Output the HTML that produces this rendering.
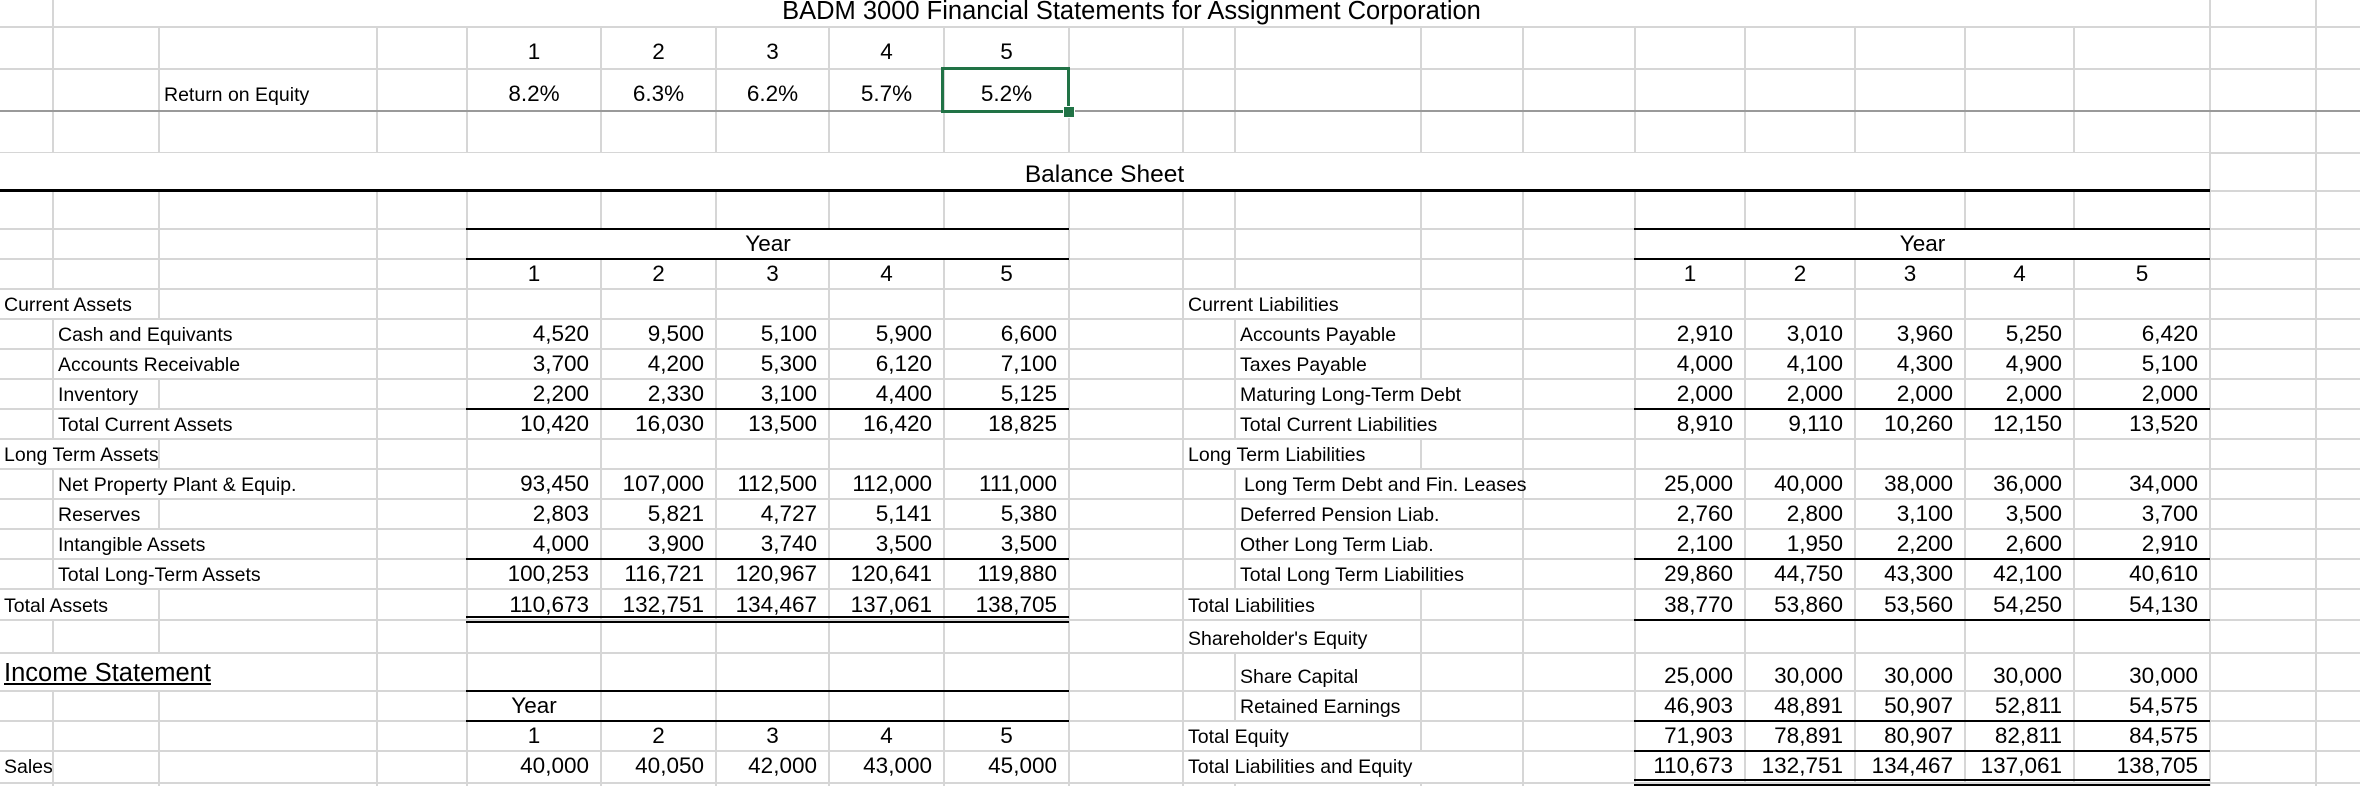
<!DOCTYPE html>
<html><head><meta charset="utf-8">
<style>
*{margin:0;padding:0;box-sizing:border-box}
body{width:2360px;height:786px;overflow:hidden;background:#fff;font-family:"Liberation Sans",sans-serif;color:#000;position:relative}
.v{position:absolute;top:0;height:786px;width:2px;background:#d6d6d6}
.h{position:absolute;left:0;width:2360px;height:2px;background:#d6d6d6}
.b{position:absolute;height:2px;background:#000}
.r{position:absolute;left:0;width:2360px}
.c{position:absolute;top:0;bottom:0;display:flex;align-items:flex-end;padding-bottom:4px;font-size:22.5px;line-height:1;white-space:nowrap}
.n{justify-content:flex-end;padding-right:12px}
.ct{justify-content:center}
.l{font-size:19.5px;background:#fff;top:1px;bottom:1px;padding-left:4px;padding-bottom:3px}
.k1{left:467px;width:134px}.k2{left:601px;width:115px}.k3{left:716px;width:113px}.k4{left:829px;width:115px}.k5{left:944px;width:125px}
.m1{left:1635px;width:110px}.m2{left:1745px;width:110px}.m3{left:1855px;width:110px}.m4{left:1965px;width:109px}.m5{left:2074px;width:136px}
</style></head><body>
<div class="v" style="left:52px"></div><div class="v" style="left:158px"></div><div class="v" style="left:376px"></div><div class="v" style="left:466px"></div><div class="v" style="left:600px"></div><div class="v" style="left:715px"></div><div class="v" style="left:828px"></div><div class="v" style="left:943px"></div><div class="v" style="left:1068px"></div><div class="v" style="left:1182px"></div><div class="v" style="left:1234px"></div><div class="v" style="left:1420px"></div><div class="v" style="left:1522px"></div><div class="v" style="left:1634px"></div><div class="v" style="left:1744px"></div><div class="v" style="left:1854px"></div><div class="v" style="left:1964px"></div><div class="v" style="left:2073px"></div><div class="v" style="left:2209px"></div><div class="v" style="left:2315px"></div>
<div class="h" style="top:26px"></div><div class="h" style="top:68px"></div><div class="h" style="top:110px;background:#9a9a9a"></div><div class="h" style="top:152px"></div><div class="h" style="top:190px"></div><div class="h" style="top:228px"></div><div class="h" style="top:258px"></div><div class="h" style="top:288px"></div><div class="h" style="top:318px"></div><div class="h" style="top:348px"></div><div class="h" style="top:378px"></div><div class="h" style="top:408px"></div><div class="h" style="top:438px"></div><div class="h" style="top:468px"></div><div class="h" style="top:498px"></div><div class="h" style="top:528px"></div><div class="h" style="top:558px"></div><div class="h" style="top:588px"></div><div class="h" style="top:619px"></div><div class="h" style="top:652px"></div><div class="h" style="top:690px"></div><div class="h" style="top:720px"></div><div class="h" style="top:750px"></div><div class="h" style="top:782px"></div>

<div class="r" style="top:0;height:26px"><div class="c ct" style="left:54px;width:2155px;background:#fff;font-size:25.5px;padding-bottom:2px">BADM 3000 Financial Statements for Assignment Corporation</div></div>
<div class="r" style="top:27px;height:42px"><div class="c ct k1" style="padding-bottom:6px">1</div><div class="c ct k2" style="padding-bottom:6px">2</div><div class="c ct k3" style="padding-bottom:6px">3</div><div class="c ct k4" style="padding-bottom:6px">4</div><div class="c ct k5" style="padding-bottom:6px">5</div></div>
<div class="r" style="top:69px;height:42px"><div class="c l" style="left:160px;width:216px;padding-bottom:5px">Return on Equity</div><div class="c ct k1" style="padding-bottom:6px">8.2%</div><div class="c ct k2" style="padding-bottom:6px">6.3%</div><div class="c ct k3" style="padding-bottom:6px">6.2%</div><div class="c ct k4" style="padding-bottom:6px">5.7%</div><div class="c ct k5" style="padding-bottom:6px">5.2%</div></div>
<div style="position:absolute;left:941px;top:67px;width:129px;height:46px;border:3px solid #217346"></div>
<div style="position:absolute;left:1064px;top:107px;width:10px;height:10px;background:#217346;outline:1px solid #fff"></div>
<div class="r" style="top:153px;height:38px"><div class="c ct" style="left:0;width:2209px;background:#fff;font-size:24.5px;padding-bottom:4px">Balance Sheet</div></div>
<div class="b" style="left:0;width:2210px;top:189px;height:3px"></div>

<div class="r" style="top:229px;height:30px"><div class="c ct" style="left:468px;width:600px;background:#fff;top:1px">Year</div><div class="c ct" style="left:1636px;width:573px;background:#fff;top:1px">Year</div></div>
<div class="r" style="top:259px;height:30px"><div class="c ct k1">1</div><div class="c ct k2">2</div><div class="c ct k3">3</div><div class="c ct k4">4</div><div class="c ct k5">5</div><div class="c ct m1">1</div><div class="c ct m2">2</div><div class="c ct m3">3</div><div class="c ct m4">4</div><div class="c ct m5">5</div></div>

<div class="r" style="top:289px;height:30px"><div class="c l" style="left:0;width:157px">Current Assets</div><div class="c l" style="left:1184px;width:236px">Current Liabilities</div></div>
<div class="r" style="top:319px;height:30px"><div class="c l" style="left:54px;width:322px">Cash and Equivants</div><div class="c n k1">4,520</div><div class="c n k2">9,500</div><div class="c n k3">5,100</div><div class="c n k4">5,900</div><div class="c n k5">6,600</div><div class="c l" style="left:1236px;width:184px">Accounts Payable</div><div class="c n m1">2,910</div><div class="c n m2">3,010</div><div class="c n m3">3,960</div><div class="c n m4">5,250</div><div class="c n m5">6,420</div></div>
<div class="r" style="top:349px;height:30px"><div class="c l" style="left:54px;width:322px">Accounts Receivable</div><div class="c n k1">3,700</div><div class="c n k2">4,200</div><div class="c n k3">5,300</div><div class="c n k4">6,120</div><div class="c n k5">7,100</div><div class="c l" style="left:1236px;width:184px">Taxes Payable</div><div class="c n m1">4,000</div><div class="c n m2">4,100</div><div class="c n m3">4,300</div><div class="c n m4">4,900</div><div class="c n m5">5,100</div></div>
<div class="r" style="top:379px;height:30px"><div class="c l" style="left:54px;width:104px">Inventory</div><div class="c n k1">2,200</div><div class="c n k2">2,330</div><div class="c n k3">3,100</div><div class="c n k4">4,400</div><div class="c n k5">5,125</div><div class="c l" style="left:1236px;width:286px">Maturing Long-Term Debt</div><div class="c n m1">2,000</div><div class="c n m2">2,000</div><div class="c n m3">2,000</div><div class="c n m4">2,000</div><div class="c n m5">2,000</div></div>
<div class="r" style="top:409px;height:30px"><div class="c l" style="left:54px;width:322px">Total Current Assets</div><div class="c n k1">10,420</div><div class="c n k2">16,030</div><div class="c n k3">13,500</div><div class="c n k4">16,420</div><div class="c n k5">18,825</div><div class="c l" style="left:1236px;width:286px">Total Current Liabilities</div><div class="c n m1">8,910</div><div class="c n m2">9,110</div><div class="c n m3">10,260</div><div class="c n m4">12,150</div><div class="c n m5">13,520</div></div>
<div class="r" style="top:439px;height:30px"><div class="c l" style="left:0;width:157px">Long Term Assets</div><div class="c l" style="left:1184px;width:236px">Long Term Liabilities</div></div>
<div class="r" style="top:469px;height:30px"><div class="c l" style="left:54px;width:322px">Net Property Plant &amp; Equip.</div><div class="c n k1">93,450</div><div class="c n k2">107,000</div><div class="c n k3">112,500</div><div class="c n k4">112,000</div><div class="c n k5">111,000</div><div class="c l" style="left:1236px;width:286px;padding-left:8px">Long Term Debt and Fin. Leases</div><div class="c n m1">25,000</div><div class="c n m2">40,000</div><div class="c n m3">38,000</div><div class="c n m4">36,000</div><div class="c n m5">34,000</div></div>
<div class="r" style="top:499px;height:30px"><div class="c l" style="left:54px;width:104px">Reserves</div><div class="c n k1">2,803</div><div class="c n k2">5,821</div><div class="c n k3">4,727</div><div class="c n k4">5,141</div><div class="c n k5">5,380</div><div class="c l" style="left:1236px;width:286px">Deferred Pension Liab.</div><div class="c n m1">2,760</div><div class="c n m2">2,800</div><div class="c n m3">3,100</div><div class="c n m4">3,500</div><div class="c n m5">3,700</div></div>
<div class="r" style="top:529px;height:30px"><div class="c l" style="left:54px;width:322px">Intangible Assets</div><div class="c n k1">4,000</div><div class="c n k2">3,900</div><div class="c n k3">3,740</div><div class="c n k4">3,500</div><div class="c n k5">3,500</div><div class="c l" style="left:1236px;width:286px">Other Long Term Liab.</div><div class="c n m1">2,100</div><div class="c n m2">1,950</div><div class="c n m3">2,200</div><div class="c n m4">2,600</div><div class="c n m5">2,910</div></div>
<div class="r" style="top:559px;height:30px"><div class="c l" style="left:54px;width:322px">Total Long-Term Assets</div><div class="c n k1">100,253</div><div class="c n k2">116,721</div><div class="c n k3">120,967</div><div class="c n k4">120,641</div><div class="c n k5">119,880</div><div class="c l" style="left:1236px;width:286px">Total Long Term Liabilities</div><div class="c n m1">29,860</div><div class="c n m2">44,750</div><div class="c n m3">43,300</div><div class="c n m4">42,100</div><div class="c n m5">40,610</div></div>
<div class="r" style="top:589px;height:31px"><div class="c l" style="left:0;width:157px">Total Assets</div><div class="c n k1">110,673</div><div class="c n k2">132,751</div><div class="c n k3">134,467</div><div class="c n k4">137,061</div><div class="c n k5">138,705</div><div class="c l" style="left:1184px;width:236px">Total Liabilities</div><div class="c n m1">38,770</div><div class="c n m2">53,860</div><div class="c n m3">53,560</div><div class="c n m4">54,250</div><div class="c n m5">54,130</div></div>
<div class="r" style="top:620px;height:33px"><div class="c l" style="left:1184px;width:236px">Shareholder's Equity</div></div>
<div class="r" style="top:653px;height:38px"><div class="c l" style="left:0;width:375px;font-size:25.5px;text-decoration:underline;padding-bottom:4px">Income Statement</div><div class="c l" style="left:1236px;width:184px">Share Capital</div><div class="c n m1">25,000</div><div class="c n m2">30,000</div><div class="c n m3">30,000</div><div class="c n m4">30,000</div><div class="c n m5">30,000</div></div>
<div class="r" style="top:691px;height:30px"><div class="c ct k1">Year</div><div class="c l" style="left:1236px;width:184px">Retained Earnings</div><div class="c n m1">46,903</div><div class="c n m2">48,891</div><div class="c n m3">50,907</div><div class="c n m4">52,811</div><div class="c n m5">54,575</div></div>
<div class="r" style="top:721px;height:30px"><div class="c ct k1">1</div><div class="c ct k2">2</div><div class="c ct k3">3</div><div class="c ct k4">4</div><div class="c ct k5">5</div><div class="c l" style="left:1184px;width:236px">Total Equity</div><div class="c n m1">71,903</div><div class="c n m2">78,891</div><div class="c n m3">80,907</div><div class="c n m4">82,811</div><div class="c n m5">84,575</div></div>
<div class="r" style="top:751px;height:32px"><div class="c l" style="left:0;width:51px;padding-bottom:5px">Sales</div><div class="c n k1" style="padding-bottom:6px">40,000</div><div class="c n k2" style="padding-bottom:6px">40,050</div><div class="c n k3" style="padding-bottom:6px">42,000</div><div class="c n k4" style="padding-bottom:6px">43,000</div><div class="c n k5" style="padding-bottom:6px">45,000</div><div class="c l" style="left:1184px;width:338px;padding-bottom:5px">Total Liabilities and Equity</div><div class="c n m1" style="padding-bottom:6px">110,673</div><div class="c n m2" style="padding-bottom:6px">132,751</div><div class="c n m3" style="padding-bottom:6px">134,467</div><div class="c n m4" style="padding-bottom:6px">137,061</div><div class="c n m5" style="padding-bottom:6px">138,705</div></div>

<div class="b" style="left:466px;width:603px;top:228px"></div>
<div class="b" style="left:466px;width:603px;top:258px"></div>
<div class="b" style="left:466px;width:603px;top:408px"></div>
<div class="b" style="left:466px;width:603px;top:558px"></div>
<div class="b" style="left:466px;width:603px;top:616px"></div>
<div class="b" style="left:466px;width:603px;top:621px"></div>
<div class="b" style="left:466px;width:603px;top:690px"></div>
<div class="b" style="left:466px;width:603px;top:720px"></div>
<div class="b" style="left:1634px;width:576px;top:228px"></div>
<div class="b" style="left:1634px;width:576px;top:258px"></div>
<div class="b" style="left:1634px;width:576px;top:408px"></div>
<div class="b" style="left:1634px;width:576px;top:558px"></div>
<div class="b" style="left:1634px;width:576px;top:619px"></div>
<div class="b" style="left:1634px;width:576px;top:720px"></div>
<div class="b" style="left:1634px;width:576px;top:750px"></div>
<div class="b" style="left:1634px;width:576px;top:779px"></div>
<div class="b" style="left:1634px;width:576px;top:784px"></div>
</body></html>
